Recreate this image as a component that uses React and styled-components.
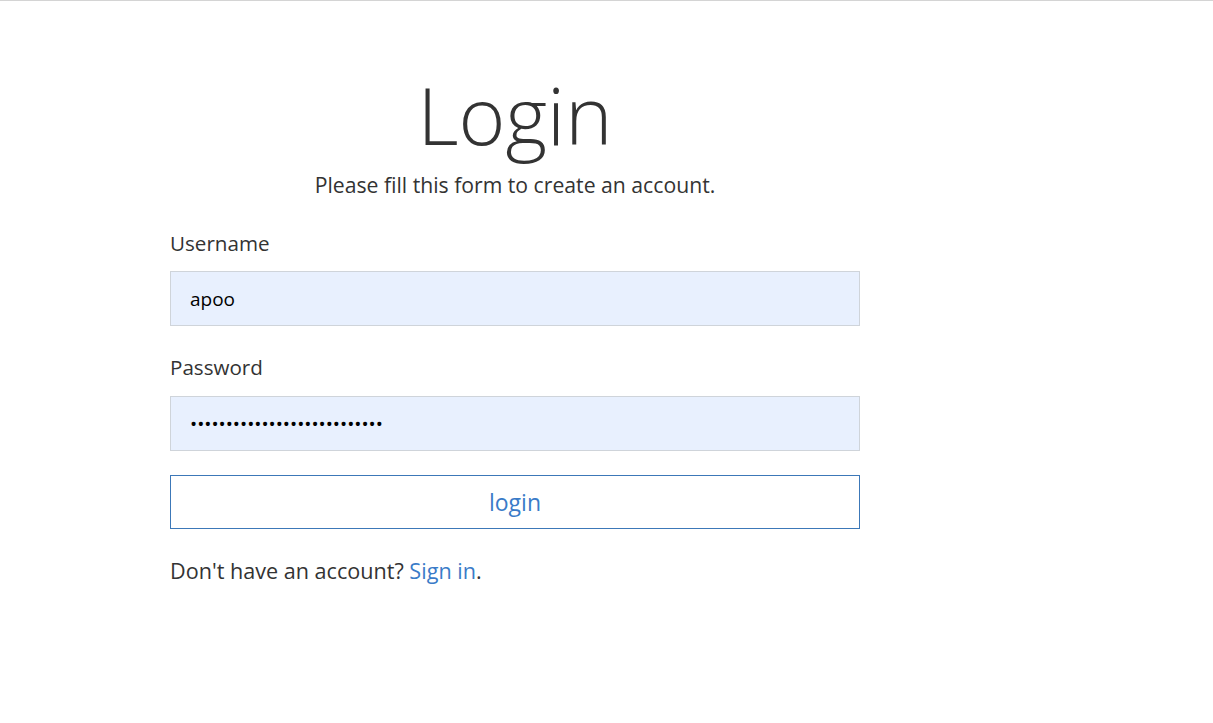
import React from 'react'
import styled, { createGlobalStyle } from 'styled-components'

const GlobalStyle = createGlobalStyle`
  html, body {
    margin: 0;
    padding: 0;
    background: #fff;
  }
  body {
    font-family: 'Open Sans', 'Noto Sans', sans-serif;
    color: #333;
  }
`

const Page = styled.div`
  border-top: 1px solid #d4d4d4;
  min-height: 722px;
`

const Wrapper = styled.div`
  width: 690px;
  margin-left: 170px;
  padding-top: 64px;
`

const Title = styled.h2`
  margin: 0;
  text-align: center;
  font-family: 'Open Sans', sans-serif;
  font-weight: 300;
  font-size: 80px;
  line-height: 98px;
  color: #333;
`

const Subtitle = styled.p`
  margin: 8px 0 30px;
  text-align: center;
  font-size: 21.2px;
  line-height: 28px;
`

const Field = styled.div`
  display: flex;
  flex-direction: column;
  margin-bottom: ${p => p.$gap || 24}px;
`

const Label = styled.label`
  font-size: 20.6px;
  line-height: 28px;
  margin-bottom: ${p => p.$gap || 14}px;
`

const Input = styled.input`
  box-sizing: border-box;
  height: 55px;
  width: 100%;
  padding: 0 19px;
  border: 1px solid #cfd4da;
  background: #e8f0fe;
  font-family: 'Open Sans', sans-serif;
  font-size: 19px;
  color: #000;
  outline: none;
`

const Button = styled.button`
  box-sizing: border-box;
  display: block;
  width: 100%;
  height: 54px;
  background: #fff;
  border: 1px solid #3c78b8;
  color: #3a7bc8;
  font-family: 'Open Sans', sans-serif;
  font-size: 23px;
  cursor: pointer;
`

const Footer = styled.p`
  margin: 28px 0 0;
  font-size: 21.6px;
  line-height: 28px;
`

const Link = styled.a`
  color: #3a7bc8;
  text-decoration: none;
`

export default function App() {
  return (
    <Page>
      <GlobalStyle />
      <Wrapper>
        <Title>Login</Title>
        <Subtitle>Please fill this form to create an account.</Subtitle>
        <Field $gap={27}>
          <Label>Username</Label>
          <Input type="text" defaultValue="apoo" />
        </Field>
        <Field>
          <Label $gap={15}>Password</Label>
          <Input type="password" defaultValue="abcdefghijklmnopqrstuvwxyz1" />
        </Field>
        <Button>login</Button>
        <Footer>
          Don't have an account? <Link href="#">Sign in</Link>.
        </Footer>
      </Wrapper>
    </Page>
  )
}
